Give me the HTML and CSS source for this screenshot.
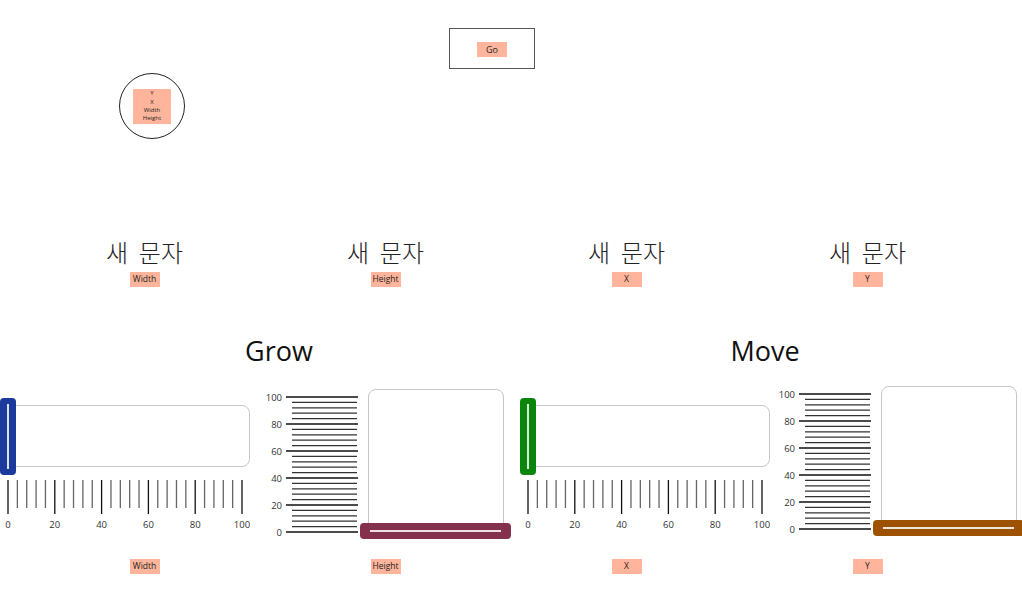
FILE: index.html
```html
<!DOCTYPE html>
<html lang="ko">
<head>
  <meta charset="UTF-8" />
  <meta name="viewport" content="width=device-width, initial-scale=1.0"/>
  <title>Grow / Move</title>
  <link rel="stylesheet" href="styles.css">
</head>
<body>

  <div class="top">
    <button class="go-btn" type="button"><span class="tag">Go</span></button>

    <div class="target">
      <span class="tag tag-stack"><span>Y</span><span>X</span><span>Width</span><span>Height</span></span>
    </div>
  </div>

  <div class="readouts">
    <div class="readout"><div class="readout-value">새 문자</div><span class="tag">Width</span></div>
    <div class="readout"><div class="readout-value">새 문자</div><span class="tag">Height</span></div>
    <div class="readout"><div class="readout-value">새 문자</div><span class="tag">X</span></div>
    <div class="readout"><div class="readout-value">새 문자</div><span class="tag">Y</span></div>
  </div>

  <div class="groups">
    <div class="group group-grow">
      <h2 class="group-title">Grow</h2>
      <div class="sliders">
        <div class="hslider">
          <div class="hs-track"><span class="hs-thumb thumb-blue"></span></div>
          <svg class="hs-ticks" width="250" height="56">
            <g id="hticks">
              <path d="M8 0v34M54.8 0v34M101.6 0v34M148.4 0v34M195.2 0v34M242 0v34" stroke="#111" stroke-width="1.3"/>
              <path d="M17.36 0v28M26.72 0v28M36.08 0v28M45.44 0v28M64.16 0v28M73.52 0v28M82.88 0v28M92.24 0v28M110.96 0v28M120.32 0v28M129.68 0v28M139.04 0v28M157.76 0v28M167.12 0v28M176.48 0v28M185.84 0v28M204.56 0v28M213.92 0v28M223.28 0v28M232.64 0v28" stroke="#666" stroke-width="1.3"/>
              <g class="tick-label" text-anchor="middle">
                <text x="8" y="47.5">0</text>
                <text x="54.8" y="47.5">20</text>
                <text x="101.6" y="47.5">40</text>
                <text x="148.4" y="47.5">60</text>
                <text x="195.2" y="47.5">80</text>
                <text x="242" y="47.5">100</text>
              </g>
            </g>
          </svg>
        </div>

        <div class="vslider vslider-height">
          <svg class="vs-scale" width="103" height="152">
            <g id="vticks">
              <path d="M21 8H93M21 35H93M21 62H93M21 89H93M21 116H93M21 143H93" stroke="#111" stroke-width="1.3"/>
              <path d="M27 13.4H92M27 18.8H92M27 24.2H92M27 29.6H92M27 40.4H92M27 45.8H92M27 51.2H92M27 56.6H92M27 67.4H92M27 72.8H92M27 78.2H92M27 83.6H92M27 94.4H92M27 99.8H92M27 105.2H92M27 110.6H92M27 121.4H92M27 126.8H92M27 132.2H92M27 137.6H92" stroke="#333" stroke-width="1.3"/>
              <g class="tick-label" text-anchor="end">
                <text x="17" y="11.5">100</text>
                <text x="17" y="38.5">80</text>
                <text x="17" y="65.5">60</text>
                <text x="17" y="92.5">40</text>
                <text x="17" y="119.5">20</text>
                <text x="17" y="146.5">0</text>
              </g>
            </g>
          </svg>
          <div class="vs-track"><span class="vs-thumb thumb-maroon"></span></div>
        </div>
      </div>
    </div>

    <div class="group group-move">
      <h2 class="group-title">Move</h2>
      <div class="sliders">
        <div class="hslider">
          <div class="hs-track"><span class="hs-thumb thumb-green"></span></div>
          <svg class="hs-ticks" width="250" height="56"><use href="#hticks"/></svg>
        </div>

        <div class="vslider vslider-y">
          <svg class="vs-scale" width="103" height="152"><use href="#vticks"/></svg>
          <div class="vs-track"><span class="vs-thumb thumb-brown"></span></div>
        </div>
      </div>
    </div>
  </div>

  <div class="readouts bottom-tags">
    <div class="readout"><span class="tag">Width</span></div>
    <div class="readout"><span class="tag">Height</span></div>
    <div class="readout"><span class="tag">X</span></div>
    <div class="readout"><span class="tag">Y</span></div>
  </div>

</body>
</html>
```

FILE: styles.css
```css
body {
  font-family: "Open Sans", "Noto Sans", sans-serif;
  background-color: white;
  color: #111;
  margin: 0;
  padding: 0;
  width: 1022px;
  height: 597px;
  overflow: hidden;
}

.top {
  position: relative;
  height: 240px;
  box-sizing: border-box;
  padding-top: 28px;
}

.go-btn {
  display: flex;
  align-items: center;
  justify-content: center;
  margin: 0 0 0 449px;
  padding: 0;
  width: 86px;
  height: 41px;
  box-sizing: border-box;
  border: 1.5px solid #555;
  background: white;
  font-family: inherit;
}

.go-btn .tag {
  margin-top: 1px;
  font-size: 9px;
}

.target {
  position: absolute;
  left: 119px;
  top: 73px;
  width: 66px;
  height: 66px;
  box-sizing: border-box;
  border: 1.2px solid #222;
  border-radius: 50%;
  display: flex;
  align-items: center;
  justify-content: center;
}

.tag {
  display: inline-flex;
  align-items: center;
  justify-content: center;
  width: 30px;
  height: 15px;
  background: #ffb59c;
  color: #222;
  font-size: 8.5px;
  line-height: 1;
}

.tag-stack {
  flex-direction: column;
  width: 38px;
  height: 35px;
  font-size: 6px;
  line-height: 8.3px;
}

.readouts {
  display: grid;
  grid-template-columns: repeat(4, 241px);
  padding-left: 24px;
}

.readout {
  display: flex;
  flex-direction: column;
  align-items: center;
}

.readout-value {
  font-family: "Noto Sans CJK KR", "Noto Sans", sans-serif;
  font-size: 24px;
  font-weight: 300;
  line-height: 24px;
  height: 24px;
  word-spacing: 4px;
  color: #222;
}

.readout .tag {
  margin-top: 8px;
}

.groups {
  display: flex;
  margin-top: 48px;
}

.group-grow {
  width: 520px;
}

.group-move {
  width: 502px;
}

.group-title {
  margin: 0;
  font-size: 27px;
  font-weight: normal;
  line-height: 32px;
  text-align: center;
}

.group-grow .group-title {
  padding-left: 38px;
}

.group-move .group-title {
  padding-right: 12px;
}

.sliders {
  display: flex;
  align-items: flex-start;
  height: 160px;
  margin-top: 19px;
}

/* horizontal slider */
.hslider {
  width: 250px;
  margin-top: 19px;
}

.hs-track {
  position: relative;
  width: 250px;
  height: 62px;
  box-sizing: border-box;
  border: 1px solid #c6c6c6;
  border-radius: 8px;
}

.hs-thumb {
  position: absolute;
  left: -1px;
  top: -8px;
  width: 16px;
  height: 77px;
  border-radius: 4px;
}

.hs-thumb::after {
  content: "";
  position: absolute;
  left: 7px;
  top: 6px;
  bottom: 6px;
  width: 1.5px;
  background: rgba(255,255,255,0.85);
}

.hs-ticks {
  display: block;
  margin-top: 13px;
}

/* vertical slider */
.vslider {
  display: flex;
  align-items: flex-start;
}

.vslider-height {
  margin-left: 15px;
  margin-top: 3px;
}

.vslider-y {
  margin-left: 8px;
}

.vs-scale {
  display: block;
}

.vs-track {
  position: relative;
  width: 136px;
  height: 148px;
  box-sizing: border-box;
  border: 1px solid #c6c6c6;
  border-radius: 8px;
}

.vs-thumb {
  position: absolute;
  left: -9px;
  bottom: -3px;
  width: 151px;
  height: 16px;
  border-radius: 4px;
}

.vs-thumb::after {
  content: "";
  position: absolute;
  left: 10px;
  right: 10px;
  top: 7px;
  height: 1.5px;
  background: rgba(255,255,255,0.85);
}

.tick-label {
  font-family: "Open Sans", sans-serif;
  font-size: 9.5px;
  fill: #333;
}

.thumb-blue { background: #1c3a9c; }
.thumb-green { background: #0b850b; }
.thumb-maroon { background: #84314e; }
.thumb-brown { background: #9c5200; }

.bottom-tags {
  margin-top: 13px;
}

.bottom-tags .tag {
  margin-top: 0;
}
```
